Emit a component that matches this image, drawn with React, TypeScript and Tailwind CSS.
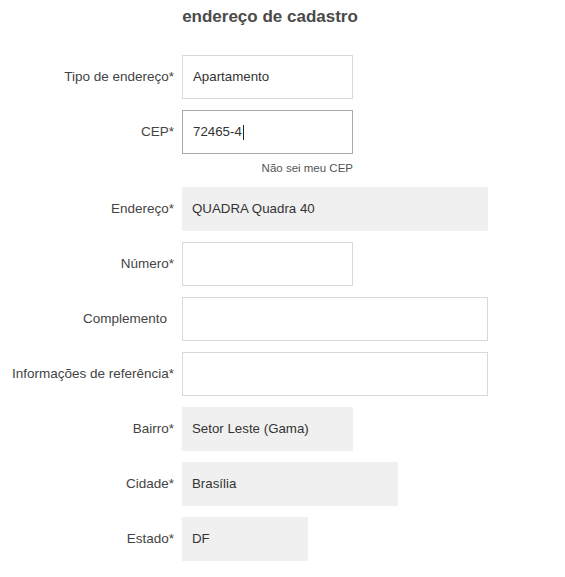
import React from "react";

type Row = {
  label: string;
  value?: string;
  width: string;
  kind: "input" | "focus" | "readonly";
  cursor?: boolean;
  labelPad?: boolean;
};

const rows: Row[] = [
  { label: "Tipo de endereço*", value: "Apartamento", width: "w-[171px]", kind: "input" },
  { label: "CEP*", value: "72465-4", width: "w-[171px]", kind: "focus", cursor: true },
  { label: "Endereço*", value: "QUADRA Quadra 40", width: "w-[306px]", kind: "readonly" },
  { label: "Número*", width: "w-[171px]", kind: "input" },
  { label: "Complemento", width: "w-[306px]", kind: "input", labelPad: true },
  { label: "Informações de referência*", width: "w-[306px]", kind: "input" },
  { label: "Bairro*", value: "Setor Leste (Gama)", width: "w-[171px]", kind: "readonly" },
  { label: "Cidade*", value: "Brasília", width: "w-[216px]", kind: "readonly" },
  { label: "Estado*", value: "DF", width: "w-[126px]", kind: "readonly" },
];

function Field({ row }: { row: Row }) {
  const base = "h-[44px] flex items-center pl-[10px] text-[13.3px] text-[#333]";
  const style =
    row.kind === "readonly"
      ? "bg-[#f0f0f0]"
      : row.kind === "focus"
      ? "bg-white border border-[#a9a9a9]"
      : "bg-white border border-[#d9d9d9]";
  return (
    <div className={`${base} ${style} ${row.width}`}>
      {row.value && <span>{row.value}</span>}
      {row.cursor && <span className="inline-block w-px h-[15px] bg-[#222] ml-px" />}
    </div>
  );
}

export default function App() {
  return (
    <div
      className="w-[565px] h-[577px] bg-white text-[#444]"
      style={{ fontFamily: '"Liberation Sans", Arial, sans-serif' }}
    >
      <div className="w-[540px] pt-[7px] text-center text-[17px] font-bold text-[#4a4a4a] leading-[20px]">
        endereço de cadastro
      </div>
      <div className="mt-[28px] flex flex-col">
        {rows.map((row, i) => (
          <React.Fragment key={row.label}>
            <div className={`flex items-center gap-[8px] ${i === 0 ? "" : "mt-[11px]"}`}>
              <div
                className={`w-[174px] shrink-0 text-right text-[13.5px] text-[#444] whitespace-nowrap ${
                  row.labelPad ? "pr-[7px]" : ""
                }`}
              >
                {row.label}
              </div>
              <Field row={row} />
            </div>
            {i === 1 && (
              <div className="w-[353px] text-right text-[11.5px] text-[#555] leading-[16px] mt-[6px]">
                Não sei meu CEP
              </div>
            )}
          </React.Fragment>
        ))}
      </div>
    </div>
  );
}
